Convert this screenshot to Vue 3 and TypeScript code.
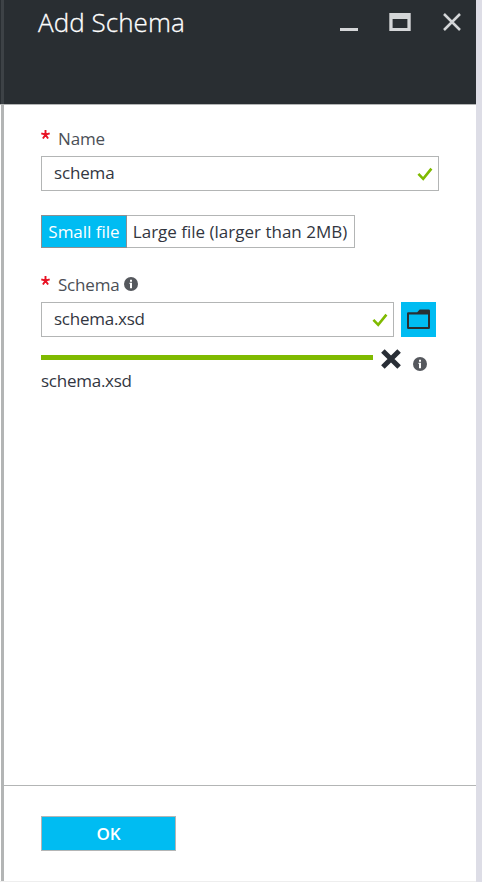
<script setup lang="ts">
import { ref } from 'vue'

const name = ref('schema')
const fileName = ref('schema.xsd')
const progress = ref(100)
const size = ref<'small' | 'large'>('small')
</script>

<template>
  <div class="stage">
    <section class="blade">
      <header class="header">
        <h1 class="title">Add Schema</h1>
        <div class="controls">
          <svg class="minimize" width="18" height="22" viewBox="0 0 18 22"><path d="M0 16h18v3H0z" /></svg>
          <svg class="maximize" width="22" height="22" viewBox="0 0 22 22">
            <path fill-rule="evenodd" d="M.3 1h21.4v18H.3zM3.6 7v9h14.8V7z" />
          </svg>
          <svg class="close" width="18" height="22" viewBox="0 0 18 22">
            <path d="M1 2l16 16M17 2L1 18" />
          </svg>
        </div>
      </header>

      <main class="body">
        <div class="label">
          <svg class="star" width="9" height="9" viewBox="0 0 9 9"><path d="M4.500 4.700V0M4.500 4.700L.3 3.300M4.500 4.700l4.200-1.400M4.500 4.700L1.900 8.500M4.500 4.700l2.600 3.800" /></svg>
          <span>Name</span>
        </div>
        <div class="input">
          <span class="value">{{ name }}</span>
          <svg class="check" width="16" height="14" viewBox="0 0 16 14"><path d="M1.400 6.800l4.800 5L14.400 1.600" /></svg>
        </div>

        <div class="segments">
          <button class="segment small" :class="{ active: size === 'small' }" @click="size = 'small'">Small file</button>
          <button class="segment large" :class="{ active: size === 'large' }" @click="size = 'large'">Large file (larger than 2MB)</button>
        </div>

        <div class="label label-schema">
          <svg class="star" width="9" height="9" viewBox="0 0 9 9"><path d="M4.500 4.700V0M4.500 4.700L.3 3.300M4.500 4.700l4.200-1.400M4.500 4.700L1.900 8.500M4.500 4.700l2.600 3.800" /></svg>
          <span>Schema</span>
          <svg class="info" width="14" height="14" viewBox="0 0 14 14">
            <circle cx="7" cy="7" r="7" /><path d="M6 2.700h2v2H6zM5.500 5.800H8v5.400H6V7h-.5z" />
          </svg>
        </div>
        <div class="upload">
          <div class="input file">
            <span class="value file-name">{{ fileName }}</span>
            <svg class="check" width="16" height="14" viewBox="0 0 16 14"><path d="M1.400 6.800l4.800 5L14.400 1.600" /></svg>
          </div>
          <button class="browse" aria-label="Browse">
            <svg width="35" height="35" viewBox="0 0 35 35">
              <path fill-rule="evenodd" d="M7.200 10.300h9l2.500-2.800h9q1.300 0 1.300 1.300v17q0 1.300-1.300 1.300H7.300Q6 27.100 6 25.800V11.500q0-1.200 1.200-1.200zM8 12.400v12.700h19V12.400z" />
            </svg>
          </button>
        </div>

        <div class="progress-row">
          <div class="track"><div class="bar" :style="{ width: progress + '%' }"></div></div>
          <svg class="cancel" width="20" height="20" viewBox="0 0 20 20"><path d="M1.900 1.900l16.200 16.200M18.100 1.900L1.900 18.100" /></svg>
          <svg class="info" width="14" height="14" viewBox="0 0 14 14">
            <circle cx="7" cy="7" r="7" /><path d="M6 2.700h2v2H6zM5.500 5.800H8v5.400H6V7h-.5z" />
          </svg>
        </div>
        <div class="uploaded file-name">{{ fileName }}</div>
      </main>

      <footer class="footer"><button class="ok">OK</button></footer>
    </section>
  </div>
</template>

<style>
body { margin: 0; background: #fff; }
</style>

<style scoped>
* { box-sizing: border-box; }
.stage {
  width: 482px;
  height: 882px;
  border-right: 6px solid #dddde6;
  background: #fff;
  font-family: "Open Sans", "Noto Sans", sans-serif;
  font-size: 17px;
  letter-spacing: -0.15px;
  color: #32363f;
}
.blade {
  display: flex;
  flex-direction: column;
  height: 882px;
  border-bottom: 1px solid #eeeeee;
}
.header {
  display: flex;
  justify-content: space-between;
  flex: none;
  height: 105px;
  padding: 0 15px 0 38px;
  background: linear-gradient(90deg, #292e32 1px, #3d4246 1px, #3d4246 4px, #292e32 4px);
  border-bottom: 1px solid #b3b5b5;
}
.title {
  margin: 5px 0 0;
  font-size: 26px;
  font-weight: 300;
  line-height: 34px;
  letter-spacing: 0.05px;
  color: #fff;
  -webkit-text-stroke: 0.3px #fff;
  white-space: nowrap;
}
.controls { display: flex; padding-top: 12px; }
.controls svg { fill: #d4d6d8; }
.controls .maximize { margin: 0 32px 0 31px; }
.controls .close { fill: none; stroke: #d4d6d8; stroke-width: 2.5; }
.body {
  flex: 1;
  margin-left: 1px;
  border-left: 3px solid #b3b5b5;
  padding: 21px 37px 0;
}
.label {
  display: flex;
  align-items: center;
  height: 24px;
  margin-bottom: 6px;
  color: #4b4f56;
}
.label-schema { letter-spacing: -0.2px; }
.star { margin: 0 8px 7px 0; fill: none; stroke: #e81123; stroke-width: 1.9; }
.input {
  display: flex;
  align-items: center;
  justify-content: space-between;
  width: 398px;
  height: 35px;
  padding: 0 5px 0 12px;
  border: 1px solid #b3b5b5;
}
.value { line-height: 24px; padding-bottom: 2px; }
.file-name { letter-spacing: -0.25px; }
.check { fill: none; stroke: #7fba00; stroke-width: 2.6; }
.segments { display: flex; height: 33px; margin: 24px 0; }
.segment {
  padding: 0;
  border: 1px solid #b3b5b5;
  background: #fff;
  color: #32363f;
  font: inherit;
  letter-spacing: 0;
  white-space: nowrap;
}
.segment.small { width: 86px; }
.segment.large { width: 228px; border-left: 0; padding-right: 1px; }
.segment.active { background: #00bcf2; color: #fff; border-color: #8c8f92; }
.info { fill: #55585d; }
.info path { fill: #fff; }
.label .info { margin: 0 0 0 5px; }
.upload { display: flex; gap: 7px; }
.input.file { width: 353px; }
.browse { width: 35px; height: 35px; padding: 0; border: 0; background: #00bcf2; }
.browse svg { display: block; fill: #292e32; }
.progress-row { display: flex; height: 22px; margin-top: 12px; }
.track { width: 332px; height: 5px; margin: 6px 8px 0 0; }
.bar { height: 5px; background: #7fba00; }
.cancel { fill: none; stroke: #292e36; stroke-width: 5; }
.progress-row .info { margin: 8px 0 0 12px; }
.uploaded { line-height: 20px; }
.footer {
  flex: none;
  height: 96px;
  margin-left: 1px;
  padding: 31px 37px 0;
  border-left: 3px solid #b3b5b5;
  background: linear-gradient(#b3b5b5, #b3b5b5) top / 100% 1px no-repeat;
}
.ok {
  display: block;
  width: 135px;
  height: 35px;
  padding: 0;
  border: 1px solid #b3b5b5;
  background: #00bcf2;
  color: #fff;
  font: 600 17px "Open Sans", "Noto Sans", sans-serif;
}
</style>
